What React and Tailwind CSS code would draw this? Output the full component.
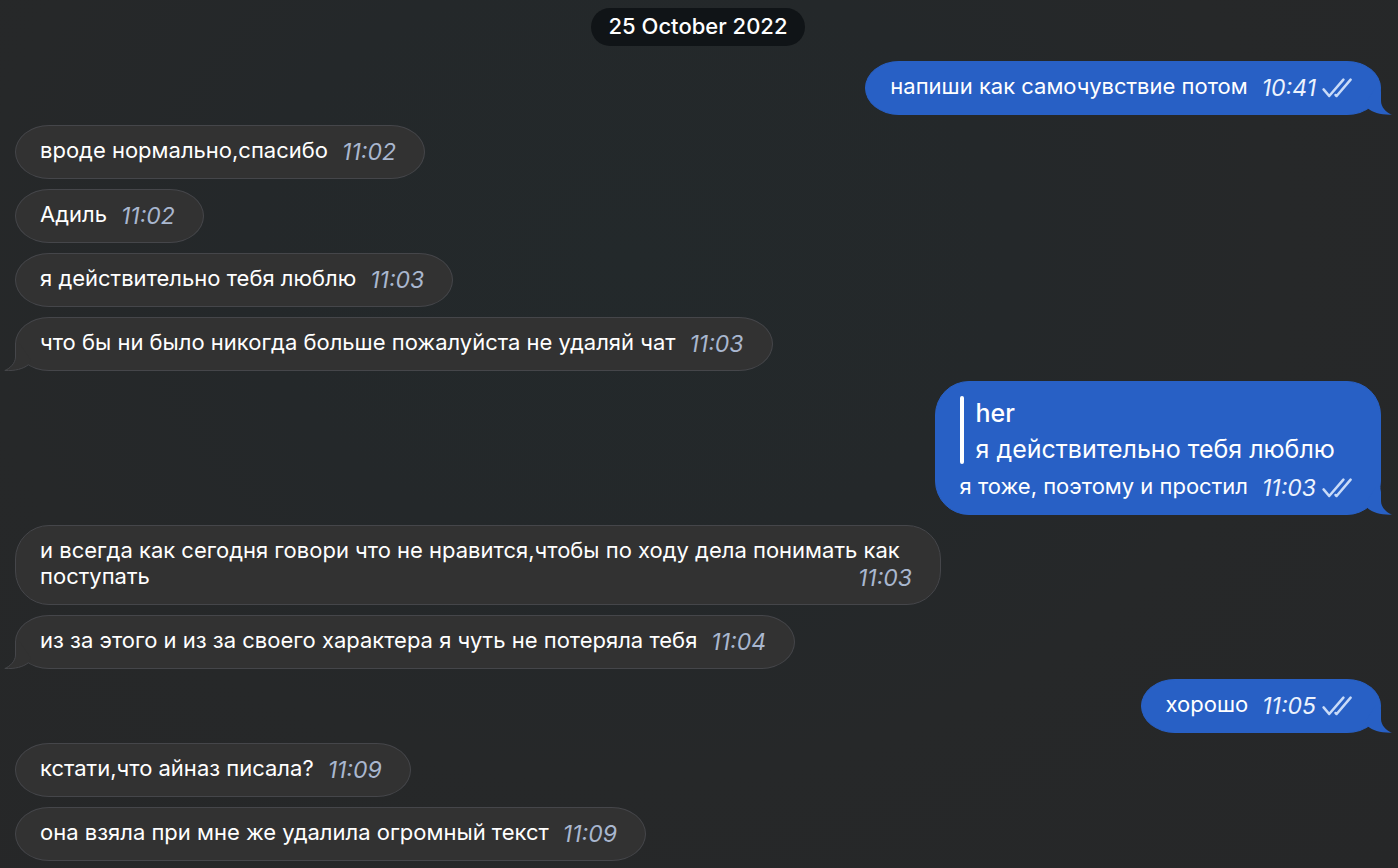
import React from "react";

const messages = [
  { id: 1, out: true, tail: true, text: "напиши как самочувствие потом", time: "10:41" },
  { id: 2, text: "вроде нормально,спасибо", time: "11:02" },
  { id: 3, text: "Адиль", time: "11:02" },
  { id: 4, text: "я действительно тебя люблю", time: "11:03" },
  { id: 5, tail: true, text: "что бы ни было никогда больше пожалуйста не удаляй чат", time: "11:03" },
  {
    id: 6,
    out: true,
    tail: true,
    tall: true,
    reply: { author: "her", text: "я действительно тебя люблю" },
    text: "я тоже, поэтому и простил",
    time: "11:03",
  },
  {
    id: 7,
    tall: true,
    text: "и всегда как сегодня говори что не нравится,чтобы по ходу дела понимать как поступать",
    time: "11:03",
  },
  { id: 8, tail: true, text: "из за этого и из за своего характера я чуть не потеряла тебя", time: "11:04" },
  { id: 9, out: true, tail: true, text: "хорошо", time: "11:05" },
  { id: 10, text: "кстати,что айназ писала?", time: "11:09" },
  { id: 11, text: "она взяла при мне же удалила огромный текст", time: "11:09" },
];

function ReadTicks() {
  return (
    <svg
      role="img"
      aria-label="Read"
      viewBox="0 0 30 20"
      className="h-5 w-[30px]"
      fill="none"
      stroke="#c9dbf8"
      strokeWidth="2.5"
      strokeLinecap="round"
      strokeLinejoin="round"
    >
      <path d="M1.6 11.4 7.2 18 21.4 1.6" />
      <path d="M13.6 17 14.6 18 28.6 1.6" />
    </svg>
  );
}

function IncomingTail() {
  return (
    <svg aria-hidden="true" viewBox="0 0 28 28" className="absolute -bottom-px -left-3 h-7 w-7">
      <path d="M11.5 0V14C11.5 20 6 25.5 .8 27.5C11 28 19 26 24.4 21.7L27 17 15 0Z" fill="#323232" />
      <path d="M11.5 0V14C11.5 20 6 25.5 .8 27.5C11 28 19 26 24.4 21.7" fill="none" stroke="#45464a" />
    </svg>
  );
}

function OutgoingTail() {
  return (
    <svg aria-hidden="true" viewBox="0 0 28 28" className="absolute -right-3 -bottom-px h-7 w-7">
      <path d="M16.2 0L17 5V14C17 20 22 25.5 28 27.6C17 28 8.5 25.5 4 21.5L1 17 12 0Z" fill="#2860c5" />
    </svg>
  );
}

function Reply({ author, text }) {
  return (
    <blockquote className="mt-[3px] mb-[9px] flex h-[68px] gap-3 text-[25px] leading-9">
      <span className="w-1 shrink-0 rounded-full bg-white" />
      <div className="-mt-px">
        <cite className="block font-medium not-italic">{author}</cite>
        <p>{text}</p>
      </div>
    </blockquote>
  );
}

function Message({ out, tail, tall, reply, text, time }) {
  return (
    <li
      className={`relative flow-root max-w-[926px] border py-[11px] pl-6 pr-7 ${
        tall ? "rounded-[34px]" : "rounded-[34px/27px]"
      } ${
        out ? "self-end border-[#2860c5] bg-[#2860c5]" : "self-start border-[#45464a] bg-[#323232]"
      }`}
    >
      {tail && (out ? <OutgoingTail /> : <IncomingTail />)}
      {reply && <Reply {...reply} />}
      <p className="relative">
        {text}
        <span
          className={`float-right ml-3.5 flex items-center gap-1.5 text-[23px] italic leading-[30px] ${
            out ? "text-[#edf3fd]" : "text-[#a9b7cf]"
          }`}
        >
          <time>{time}</time>
          {out && <ReadTicks />}
        </span>
      </p>
    </li>
  );
}

export default function App() {
  return (
    <main className="flex min-h-screen flex-col bg-[#262829] bg-[radial-gradient(ellipse_at_45%_30%,#23292b_0%,#24282a_35%,#262829_60%,#262728_100%)] pb-[7px] pl-[15px] pr-[17px] pt-2 font-[Inter,'Noto_Sans',sans-serif] text-[22px] leading-[26px] text-white">
      <h2 className="self-center rounded-full bg-[#101417] px-[18px] pt-[5px] pb-[7px] font-medium">25 October 2022</h2>
      <ol className="mt-[15px] flex flex-col gap-2.5">
        {messages.map((m) => (
          <Message key={m.id} {...m} />
        ))}
      </ol>
    </main>
  );
}
